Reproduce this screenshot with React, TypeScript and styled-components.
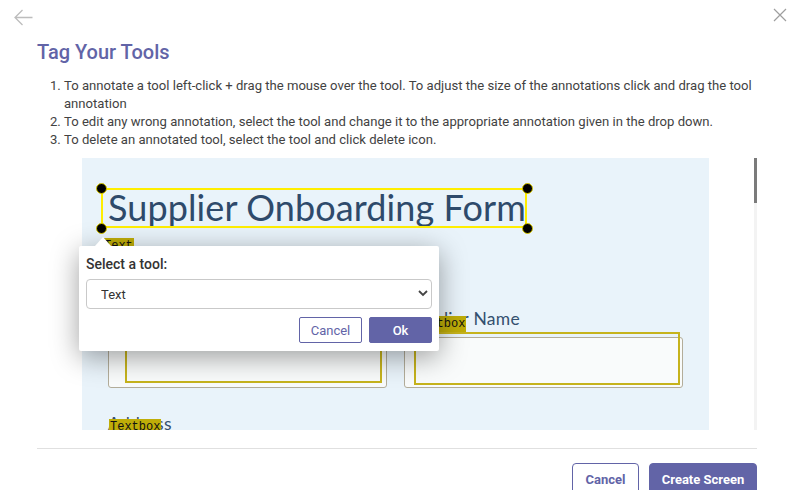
import React from "react";
import styled, { createGlobalStyle } from "styled-components";

const PURPLE = "#6264a7";

const Global = createGlobalStyle`
  html, body { margin: 0; padding: 0; background: #fff; }
  body { font-family: Roboto, "Liberation Sans", sans-serif; overflow: hidden; }
  * { box-sizing: border-box; }
`;

const Page = styled.div`
  width: 799px;
  height: 490px;
  overflow: hidden;
  display: flex;
  flex-direction: column;
`;

const TopBar = styled.div`
  height: 30px;
  flex-shrink: 0;
  display: flex;
  justify-content: space-between;
  align-items: flex-start;
  padding: 8px 12px 0 14px;
`;

const IconButton = styled.button<{ $top?: number }>`
  border: 0;
  background: none;
  padding: 0;
  margin-top: ${(p) => p.$top ?? 0}px;
  display: flex;
  cursor: pointer;
`;

const Content = styled.div`
  margin-left: 37px;
  width: 720px;
  flex-shrink: 0;
  display: flex;
  flex-direction: column;
`;

const Title = styled.h1`
  margin: 10px 0 0;
  font-size: 20px;
  line-height: 24px;
  font-weight: 500;
  color: ${PURPLE};
`;

const Steps = styled.ol`
  margin: 13px 0 0;
  padding-left: 27px;
  font-size: 13.1px;
  line-height: 18px;
  color: #424242;
`;

const ScrollArea = styled.div`
  margin-top: 9px;
  height: 272px;
  flex-shrink: 0;
  display: flex;
`;

const Viewport = styled.div`
  flex: 1;
  overflow: hidden;
  display: flex;
  justify-content: center;
`;

const Track = styled.div`
  width: 3px;
  background: #f3f3f3;
  display: flex;
  flex-direction: column;
`;

const Thumb = styled.div`
  height: 45px;
  background: #7b7b7b;
`;

const Canvas = styled.div`
  position: relative;
  width: 627px;
  min-height: 420px;
  flex-shrink: 0;
  background: #e9f3fa;
  padding: 28px 26px 0;
  font-family: Lato, "Open Sans", sans-serif;
  color: #2e4a6b;
`;

const FormTitle = styled.div`
  font-size: 36px;
  letter-spacing: 0.1px;
  line-height: 42px;
  font-weight: 400;
  white-space: nowrap;
`;

const FormGrid = styled.div`
  margin-top: 81px;
  display: grid;
  grid-template-columns: 279px 279px;
  column-gap: 17px;
  row-gap: 26px;
`;

const Field = styled.div`
  display: flex;
  flex-direction: column;
  gap: 8px;
`;

const FieldLabel = styled.div`
  font-size: 17.5px;
  letter-spacing: 0.3px;
  line-height: 20px;
  color: #34506f;
`;

const FieldBox = styled.div`
  height: 51px;
  border: 1px solid #b3ad9a;
  border-radius: 3px;
  background: #f9fbfb;
`;

const Annot = styled.div<{ $selected?: boolean }>`
  position: absolute;
  border: ${(p) => (p.$selected ? "2px solid #ffee00" : "2px solid #c6b31c")};
`;

const Handle = styled.div`
  position: absolute;
  width: 11px;
  height: 11px;
  margin: -5.5px 0 0 -5.5px;
  border-radius: 50%;
  background: #000;
  border: 1px solid #d8c800;
`;

const Tag = styled.div`
  position: absolute;
  height: 16px;
  padding: 0 1px;
  background: #bfad08;
  color: #111;
  font-family: "Liberation Mono", "DejaVu Sans Mono", monospace;
  font-size: 12px;
  line-height: 16px;
`;

const Popover = styled.div`
  position: absolute;
  left: -3px;
  top: 88px;
  width: 360px;
  padding: 8px 7px;
  background: #fff;
  border-radius: 2px;
  box-shadow: 0 6px 28px rgba(0, 0, 0, 0.38);
  font-family: Roboto, "Liberation Sans", sans-serif;
  &::before {
    content: "";
    position: absolute;
    left: 16px;
    top: -9px;
    border-left: 8px solid transparent;
    border-right: 8px solid transparent;
    border-bottom: 9px solid #fff;
  }
`;

const PopTitle = styled.div`
  font-size: 14px;
  line-height: 20px;
  font-weight: 500;
  color: #333;
  margin-bottom: 5px;
`;

const SelectWrap = styled.div`
  position: relative;
  height: 30px;
`;

const Select = styled.select`
  appearance: none;
  width: 100%;
  height: 30px;
  border: 1px solid #c9c9c9;
  border-radius: 4px;
  background: #fff;
  padding: 0 0 0 14px;
  font-family: Roboto, "Liberation Sans", sans-serif;
  font-size: 13px;
  color: #333;
  outline: none;
`;

const Chevron = styled.svg`
  position: absolute;
  right: 4px;
  top: 11px;
  pointer-events: none;
`;

const PopActions = styled.div`
  margin-top: 8px;
  display: flex;
  justify-content: flex-end;
  gap: 7px;
`;

const Btn = styled.button<{ $primary?: boolean; $w: number; $h: number; $size: number; $weight: number; $radius: number }>`
  width: ${(p) => p.$w}px;
  height: ${(p) => p.$h}px;
  flex-shrink: 0;
  border-radius: ${(p) => p.$radius}px;
  border: 1px solid ${PURPLE};
  background: ${(p) => (p.$primary ? PURPLE : "#fff")};
  color: ${(p) => (p.$primary ? "#fff" : PURPLE)};
  font-family: Roboto, "Liberation Sans", sans-serif;
  font-size: ${(p) => p.$size}px;
  font-weight: ${(p) => p.$weight};
  padding: 0;
  cursor: pointer;
`;

const Footer = styled.div`
  margin-top: 18px;
  border-top: 1px solid #e0e0e0;
  padding-top: 14px;
  display: flex;
  justify-content: flex-end;
  gap: 10px;
`;

export default function App() {
  return (
    <Page>
      <Global />
      <TopBar>
        <IconButton $top={1} aria-label="Back">
          <svg width="19" height="17" viewBox="0 0 19 17" fill="none" stroke="#bdbdbd" strokeWidth="1.3">
            <path d="M18.5 8.5H1M8.5 1L1 8.5L8.5 16" />
          </svg>
        </IconButton>
        <IconButton aria-label="Close">
          <svg width="14" height="14" viewBox="0 0 14 14" fill="none" stroke="#9e9e9e" strokeWidth="1.2">
            <path d="M1 1L13 13M13 1L1 13" />
          </svg>
        </IconButton>
      </TopBar>
      <Content>
        <Title>Tag Your Tools</Title>
        <Steps>
          <li>
            To annotate a tool left-click + drag the mouse over the tool. To adjust the size of the annotations click and drag the tool annotation
          </li>
          <li>To edit any wrong annotation, select the tool and change it to the appropriate annotation given in the drop down.</li>
          <li>To delete an annotated tool, select the tool and click delete icon.</li>
        </Steps>
        <ScrollArea>
          <Viewport>
            <Canvas>
              <FormTitle>Supplier Onboarding Form</FormTitle>
              <FormGrid>
                <Field>
                  <FieldLabel>Supplier ID</FieldLabel>
                  <FieldBox />
                </Field>
                <Field>
                  <FieldLabel>Supplier Name</FieldLabel>
                  <FieldBox />
                </Field>
                <Field>
                  <FieldLabel>Address</FieldLabel>
                  <FieldBox />
                </Field>
              </FormGrid>

              <Annot $selected style={{ left: 19, top: 30, width: 426, height: 40 }} />
              <Handle style={{ left: 19, top: 30 }} />
              <Handle style={{ left: 445, top: 30 }} />
              <Handle style={{ left: 19, top: 70 }} />
              <Handle style={{ left: 445, top: 70 }} />
              <Tag style={{ left: 21, top: 80 }}>Text</Tag>

              <Annot style={{ left: 43, top: 174, width: 257, height: 51 }} />
              <Tag style={{ left: 43, top: 158 }}>Textbox</Tag>
              <Annot style={{ left: 332, top: 174, width: 266, height: 53 }} />
              <Tag style={{ left: 332, top: 158 }}>Textbox</Tag>
              <Tag style={{ left: 27, top: 261 }}>Textbox</Tag>
              <Annot style={{ left: 43, top: 278, width: 257, height: 51 }} />

              <Popover>
                <PopTitle>Select a tool:</PopTitle>
                <SelectWrap>
                  <Select defaultValue="Text">
                    <option>Text</option>
                    <option>Textbox</option>
                    <option>Button</option>
                  </Select>
                  <Chevron width="10" height="7" viewBox="0 0 10 7" fill="none" stroke="#444" strokeWidth="1.8">
                    <path d="M1 1L5 5L9 1" />
                  </Chevron>
                </SelectWrap>
                <PopActions>
                  <Btn $w={63} $h={26} $size={13} $weight={400} $radius={2}>Cancel</Btn>
                  <Btn $primary $w={63} $h={26} $size={13} $weight={500} $radius={2}>Ok</Btn>
                </PopActions>
              </Popover>
            </Canvas>
          </Viewport>
          <Track>
            <Thumb />
          </Track>
        </ScrollArea>
        <Footer>
          <Btn $w={67} $h={32} $size={13} $weight={700} $radius={4}>Cancel</Btn>
          <Btn $primary $w={108} $h={32} $size={13} $weight={700} $radius={4}>Create Screen</Btn>
        </Footer>
      </Content>
    </Page>
  );
}
